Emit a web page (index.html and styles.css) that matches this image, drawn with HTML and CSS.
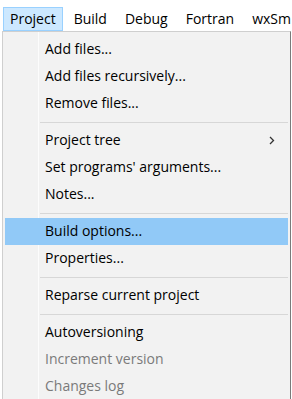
FILE: index.html
```html
<!DOCTYPE html>
<html lang="en">
<head>
    <meta charset="UTF-8">
    <title>Project menu</title>
    <link rel="stylesheet" href="styles.css">
</head>
<body>
    <div class="menubar">
        <span class="bar-item open">Project</span>
        <span class="bar-item">Build</span>
        <span class="bar-item">Debug</span>
        <span class="bar-item">Fortran</span>
        <span class="bar-item">wxSm</span>
    </div>

    <div class="menu">
        <div class="item">Add files...</div>
        <div class="item">Add files recursively...</div>
        <div class="item">Remove files...</div>
        <div class="sep"></div>
        <div class="item">Project tree
            <svg class="arrow" width="6" height="9" viewBox="0 0 6 9"><path d="M1 1 L4.5 4.5 L1 8" fill="none" stroke="#333" stroke-width="1.3"/></svg>
        </div>
        <div class="item">Set programs' arguments...</div>
        <div class="item">Notes...</div>
        <div class="sep"></div>
        <div class="item active">Build options...</div>
        <div class="item">Properties...</div>
        <div class="sep"></div>
        <div class="item">Reparse current project</div>
        <div class="sep"></div>
        <div class="item">Autoversioning</div>
        <div class="item disabled">Increment version</div>
        <div class="item disabled">Changes log</div>
    </div>
</body>
</html>
```

FILE: styles.css
```css
* { box-sizing: border-box; }
body {
    margin: 0;
    background: #fff;
    font-family: 'Open Sans', sans-serif;
    font-size: 14px;
    color: #000;
    overflow: hidden;
    height: 399px;
}
.menubar {
    display: flex;
    padding: 7px 0 0 3px;
    height: 31px;
    white-space: nowrap;
    overflow: hidden;
}
.bar-item {
    height: 24px;
    line-height: 22px;
    padding: 0 6px;
    margin-right: 4px;
    border: 1px solid transparent;
}
.bar-item.open {
    background: #cce8ff;
    border-color: #99d1ff;
}
.menu {
    margin-left: 2px;
    width: 289px;
    height: 380px;
    background: #f2f2f2;
    border: 1px solid #cfcfcf;
    border-right-color: #7a7a7a;
    padding: 4px 2px 0 2px;
    background-image: linear-gradient(#fcfcfc, #fcfcfc);
    background-size: 1px 100%;
    background-position: 35px 0;
    background-repeat: no-repeat;
}
.item {
    position: relative;
    height: 27px;
    line-height: 26px;
    padding-left: 40px;
    white-space: nowrap;
}
.item.active { background: #91c9f7; }
.item.disabled { color: #7a7a7a; }
.arrow {
    position: absolute;
    right: 13px;
    top: 9px;
}
.sep {
    height: 10px;
    margin-left: 35px;
    padding-top: 5px;
}
.sep::before {
    content: "";
    display: block;
    height: 1px;
    background: #d7d7d7;
}
```
